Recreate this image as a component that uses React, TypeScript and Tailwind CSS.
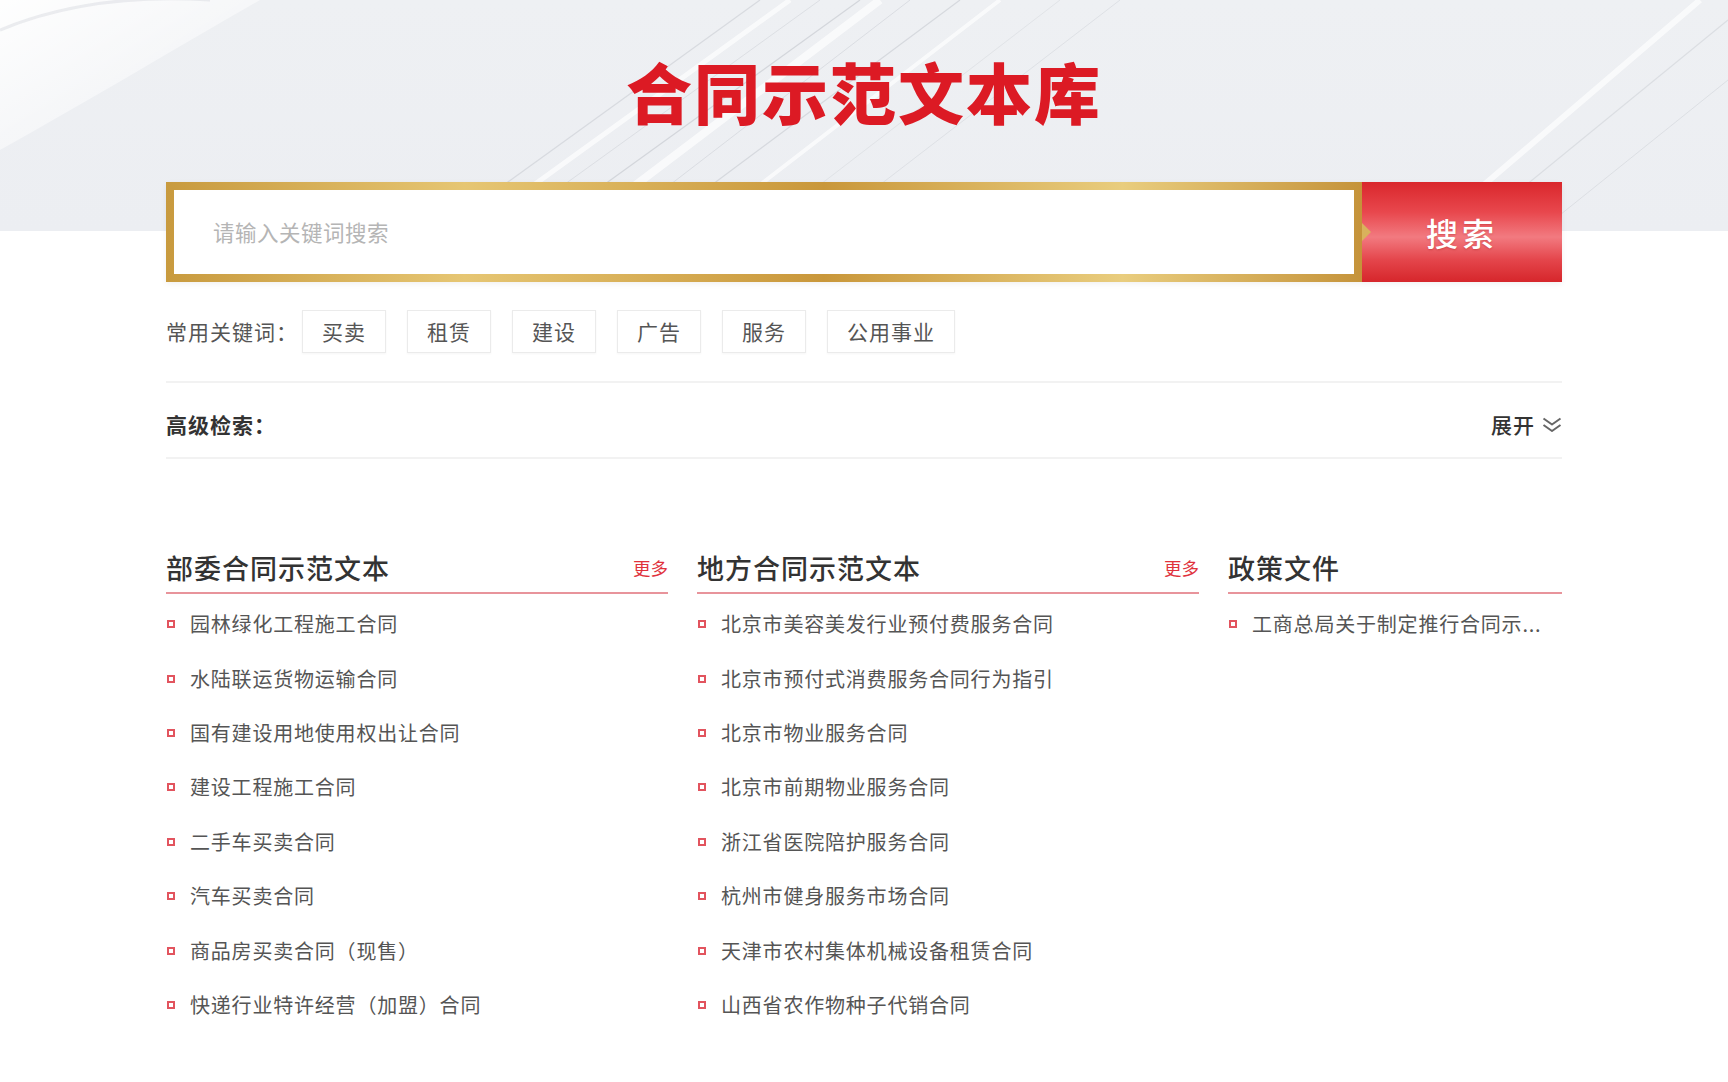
import React from "react";

const tags = ["买卖", "租赁", "建设", "广告", "服务", "公用事业"];

const col1 = [
  "园林绿化工程施工合同",
  "水陆联运货物运输合同",
  "国有建设用地使用权出让合同",
  "建设工程施工合同",
  "二手车买卖合同",
  "汽车买卖合同",
  "商品房买卖合同（现售）",
  "快递行业特许经营（加盟）合同",
];
const col2 = [
  "北京市美容美发行业预付费服务合同",
  "北京市预付式消费服务合同行为指引",
  "北京市物业服务合同",
  "北京市前期物业服务合同",
  "浙江省医院陪护服务合同",
  "杭州市健身服务市场合同",
  "天津市农村集体机械设备租赁合同",
  "山西省农作物种子代销合同",
];
const col3 = ["工商总局关于制定推行合同示..."];

function HeroStreaks() {
  return (
    <svg
      className="absolute left-0 top-0 h-[231px] w-full pointer-events-none"
      viewBox="0 0 1728 231"
      preserveAspectRatio="none"
    >
      <defs>
        <linearGradient id="wband" x1="0" y1="0" x2="1" y2="1">
          <stop offset="0" stopColor="#ffffff" stopOpacity="0.95" />
          <stop offset="1" stopColor="#ffffff" stopOpacity="0" />
        </linearGradient>
      </defs>
      <path d="M0 0 L260 0 C190 40 90 100 0 150 Z" fill="url(#wband)" />
      <path d="M0 30 C60 5 130 -5 210 0" stroke="#d9dce2" strokeWidth="3" fill="none" opacity="0.5" />
      {[
        [440, 231, 760, 0, "#cfd2d8", 1.2],
        [470, 231, 790, 0, "#ffffff", 5],
        [500, 231, 820, 0, "#d6d9de", 1],
        [540, 231, 860, 0, "#c9ccd2", 1.2],
        [575, 231, 880, 0, "#ffffff", 8],
        [610, 231, 910, 0, "#d3d6dc", 1],
        [650, 231, 960, 0, "#cdd0d6", 1.2],
        [700, 231, 1000, 0, "#ffffff", 4],
        [760, 231, 1060, 0, "#dcdfe3", 1],
        [820, 231, 1120, 0, "#d8dbe0", 1],
        [1430, 231, 1700, 0, "#ffffff", 6],
        [1470, 231, 1728, 20, "#d4d7dc", 1.2],
        [1540, 231, 1728, 80, "#d6d9de", 1],
      ].map((l, i) => (
        <line
          key={i}
          x1={l[0] as number}
          y1={l[1] as number}
          x2={l[2] as number}
          y2={l[3] as number}
          stroke={l[4] as string}
          strokeWidth={l[5] as number}
          opacity={0.7}
        />
      ))}
    </svg>
  );
}

function Column({
  title,
  items,
  more,
}: {
  title: string;
  items: string[];
  more?: boolean;
}) {
  return (
    <div className="min-w-0">
      <div className="flex h-[48px] items-center justify-between border-b-2 border-[#e8949b] pb-[2px]">
        <span className="text-[27px] font-medium tracking-[1px] text-[#333]">{title}</span>
        {more && <span className="text-[17.5px] text-[#e0323c]">更多</span>}
      </div>
      <ul className="pt-[3px]">
        {items.map((t) => (
          <li key={t} className="flex h-[54.4px] items-center">
            <span className="mr-[15px] ml-[1px] h-[8px] w-[8px] shrink-0 border-2 border-[#e2545e]" />
            <span className="whitespace-nowrap text-[20px] tracking-[0.8px] text-[#555]">{t}</span>
          </li>
        ))}
      </ul>
    </div>
  );
}

export default function App() {
  return (
    <div className="min-h-[1082px] bg-white font-['Noto_Sans_CJK_SC','Noto_Sans',sans-serif]">
      <div className="relative bg-[linear-gradient(to_bottom,#eef0f3_0px,#eceef2_231px,#ffffff_231px)]">
        <HeroStreaks />
        <div className="relative mx-auto w-[1396px]">
          <div className="flex h-[182px] items-center justify-center pb-[2px]">
            <h1 className="text-[66px] font-black leading-none tracking-[2px] text-[#dc1a24]">
              合同示范文本库
            </h1>
          </div>
          <div className="flex h-[100px] shadow-[0_2px_6px_rgba(0,0,0,0.06)]">
            <div className="relative flex-1 bg-[linear-gradient(90deg,#c89a3e,#e6c673_25%,#c9973a_55%,#e9cd7e_80%,#c5933a)] p-[8px]">
              <div className="flex h-full items-center bg-white pl-[39px]">
                <span className="text-[21.5px] tracking-[0.5px] text-[#b5b5b5]">请输入关键词搜索</span>
              </div>
              <div className="absolute right-[-9px] top-1/2 h-0 w-0 -translate-y-1/2 border-y-[9px] border-l-[9px] border-y-transparent border-l-[#d9b25c]" />
            </div>
            <button className="flex w-[200px] items-center justify-center bg-[linear-gradient(to_bottom,#d9272c_0%,#e8474d_30%,#f27a80_55%,#e4454b_78%,#d6262b_100%)]">
              <span className="text-[32px] font-medium tracking-[4px] text-white [text-shadow:0_1px_2px_rgba(150,0,0,0.3)]">
                搜索
              </span>
            </button>
          </div>
        </div>
      </div>

      <div className="mx-auto w-[1396px]">
        <div className="mt-[28px] flex h-[43px] items-center">
          <span className="mr-[4px] text-[21px] tracking-[1px] text-[#555]">常用关键词：</span>
          <div className="flex gap-[21px]">
            {tags.map((t) => (
              <span
                key={t}
                className="flex h-[43px] items-center border border-[#ebebeb] px-[19px] text-[21px] tracking-[1px] text-[#555] shadow-[0_1px_2px_rgba(0,0,0,0.04)]"
              >
                {t}
              </span>
            ))}
          </div>
        </div>
        <div className="mt-[28px] h-[2px] bg-[#f2f2f2]" />
        <div className="flex h-[74px] items-center justify-between pt-[10px]">
          <span className="text-[21px] font-bold tracking-[1px] text-[#333]">高级检索：</span>
          <span className="flex items-center text-[21px] font-medium tracking-[1px] text-[#333]">
            展开
            <svg className="ml-[7px] h-[16px] w-[20px]" viewBox="0 0 20 16" fill="none">
              <polyline points="1.5,1.5 10,7.5 18.5,1.5" stroke="#666" strokeWidth="2" strokeLinejoin="round" />
              <polyline points="1.5,8 10,14 18.5,8" stroke="#666" strokeWidth="2" strokeLinejoin="round" />
            </svg>
          </span>
        </div>
        <div className="h-[2px] bg-[#f2f2f2]" />

        <div className="mt-[87px] grid grid-cols-[502px_502px_1fr] gap-[29px]">
          <Column title="部委合同示范文本" items={col1} more />
          <Column title="地方合同示范文本" items={col2} more />
          <Column title="政策文件" items={col3} />
        </div>
      </div>
    </div>
  );
}
